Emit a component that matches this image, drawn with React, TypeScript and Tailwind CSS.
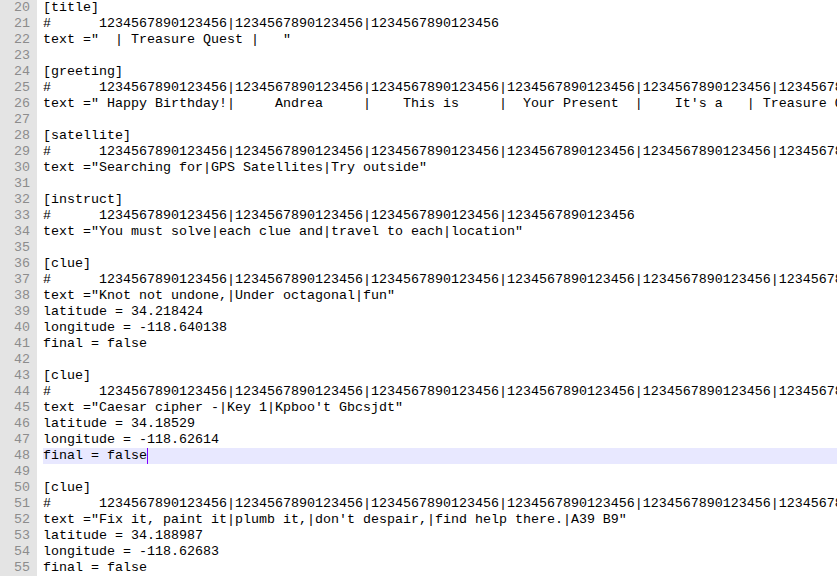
const ruler = "1234567890123456|";
const rep = (n: number) => Array(n).fill(ruler).join("");

const lines: string[] = [
  "[title]",
  "#      1234567890123456|1234567890123456|1234567890123456",
  'text ="  | Treasure Quest |   "',
  "",
  "[greeting]",
  "#      " + rep(8),
  'text =" Happy Birthday!|     Andrea     |    This is     |  Your Present  |    It\'s a   | Treasure Quest',
  "",
  "[satellite]",
  "#      " + rep(8),
  'text ="Searching for|GPS Satellites|Try outside"',
  "",
  "[instruct]",
  "#      1234567890123456|1234567890123456|1234567890123456|1234567890123456",
  'text ="You must solve|each clue and|travel to each|location"',
  "",
  "[clue]",
  "#      " + rep(8),
  'text ="Knot not undone,|Under octagonal|fun"',
  "latitude = 34.218424",
  "longitude = -118.640138",
  "final = false",
  "",
  "[clue]",
  "#      " + rep(8),
  'text ="Caesar cipher -|Key 1|Kpboo\'t Gbcsjdt"',
  "latitude = 34.18529",
  "longitude = -118.62614",
  "final = false",
  "",
  "[clue]",
  "#      " + rep(8),
  'text ="Fix it, paint it|plumb it,|don\'t despair,|find help there.|A39 B9"',
  "latitude = 34.188987",
  "longitude = -118.62683",
  "final = false",
];

const CURRENT = 48;

export default function App() {
  return (
    <div className="w-[837px] h-[581px] overflow-hidden bg-white font-['Liberation_Mono','Courier_New',monospace] text-[13.333px] leading-[16px] text-black">
      {lines.map((line, i) => {
        const num = 20 + i;
        const active = num === CURRENT;
        return (
          <div key={num} className="flex h-4">
            <div className="w-[37px] shrink-0 bg-[#e4e4e4] pr-[7px] text-right text-[#8c8c8c]">
              {num}
            </div>
            <div className="w-[6px] shrink-0 bg-white" />
            <div
              className={
                "flex-1 whitespace-pre overflow-hidden " +
                (active ? "bg-[#e8e8ff]" : "")
              }
            >
              {active ? (
                <>
                  {line}
                  <span className="inline-block w-px h-4 align-top bg-[#8000ff]" />
                </>
              ) : (
                line
              )}
            </div>
          </div>
        );
      })}
    </div>
  );
}
